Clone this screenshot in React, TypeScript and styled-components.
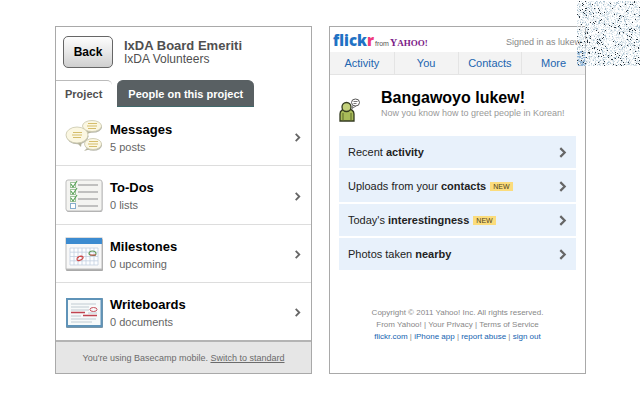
import React from "react";
import styled, { createGlobalStyle } from "styled-components";

const GlobalStyle = createGlobalStyle`
  *, *::before, *::after { box-sizing: border-box; }
  body { margin: 0; background: #fff; font-family: "Liberation Sans", Arial, sans-serif; color: #333; }
  a { color: inherit; text-decoration: none; }
  h1, h2, p, ul { margin: 0; padding: 0; }
  ul { list-style: none; }
`;

const Page = styled.main`
  position: relative;
  display: grid;
  grid-template-columns: 1fr 1fr;
  gap: 17px;
  min-height: 100vh;
  padding: 26px 54px 26px 55px;
`;

const Phone = styled.section`
  display: flex;
  flex-direction: column;
  min-width: 0;
  background: #fff;
  border: 1px solid #a9a9a9;
`;

/* Basecamp */

const ProjectHeader = styled.header`
  display: flex;
  align-items: center;
  gap: 11px;
  height: 53px;
  padding: 0 7px 4px;
`;

const BackButton = styled.button`
  width: 50px;
  height: 32px;
  padding: 0;
  border: 1px solid #666;
  border-radius: 5px;
  background: linear-gradient(#fdfdfd, #e8e8e8 50%, #cfcfcf);
  color: #000;
  font: bold 12px "Liberation Sans", Arial, sans-serif;
`;

const ProjectTitle = styled.h1`
  padding-top: 1px;
  font-size: 13px;
  line-height: 14px;
  color: #505050;
`;

const ProjectOrg = styled.p`
  font-size: 12px;
  line-height: 13px;
  color: #505050;
`;

const Tabs = styled.nav`
  display: flex;
  gap: 5px;
  height: 27px;
`;

const Tab = styled.a<{ $active?: boolean }>`
  display: flex;
  align-items: center;
  padding: ${(p) => (p.$active ? "0 10px 0 9px" : "0 11px")};
  border-radius: ${(p) => (p.$active ? "0 5px 0 0" : "6px 6px 0 0")};
  border-top: 1px solid ${(p) => (p.$active ? "#bbb" : "#596063")};
  border-bottom: 1px solid ${(p) => (p.$active ? "#fff" : "#40696b")};
  background: ${(p) => (p.$active ? "#fff" : "#596063")};
  color: ${(p) => (p.$active ? "#505050" : "#fff")};
  font-size: 11px;
  font-weight: bold;
  white-space: nowrap;
`;

const ToolList = styled.ul`
  display: grid;
  grid-auto-rows: 1fr;
  flex: 1;
`;

const ToolItem = styled.li`
  display: grid;
  & + & { border-top: 1px solid #ddd; }
`;

const ToolLink = styled.a`
  display: flex;
  align-items: center;
  gap: 6px;
  padding: 3px 9px 0;
`;

const ToolText = styled.div`
  flex: 1;
`;

const ToolName = styled.h2`
  font-size: 13px;
  line-height: 18px;
  color: #000;
`;

const ToolCount = styled.p`
  font-size: 11px;
  line-height: 16px;
  color: #666;
`;

const ProjectFooter = styled.footer`
  display: flex;
  align-items: center;
  justify-content: center;
  height: 33px;
  border-top: 2px solid #b4b4b4;
  background: #e6e6e6;
  color: #6b6b6b;
  font-size: 9px;
  white-space: pre;
  a { text-decoration: underline; }
`;

/* Flickr */

const FlickrHeader = styled.header`
  display: flex;
  align-items: center;
  justify-content: space-between;
  height: 25px;
  padding: 4px 4px 0 3px;
`;

const Logo = styled.a`
  display: flex;
  align-items: baseline;
  line-height: 20px;
`;

const LogoName = styled.span`
  font: 800 15px/20px "Open Sans", sans-serif;
  color: #1f72c4;
  span { color: #ee3a7c; }
`;

const LogoFrom = styled.span`
  margin: 0 1px;
  font-size: 7px;
  color: #555;
`;

const LogoYahoo = styled.span`
  font: bold 9px "Liberation Serif", serif;
  color: #7b2087;
  span { font-size: 10px; }
`;

const SignedIn = styled.p`
  font-size: 9px;
  color: #888;
`;

const FlickrNav = styled.nav`
  display: grid;
  grid-template-columns: repeat(4, 1fr);
  height: 23px;
  border-bottom: 1px solid #e4e4e4;
  background: #f3f3f3;
`;

const NavLink = styled.a`
  display: flex;
  align-items: center;
  justify-content: center;
  color: #2265b0;
  font-size: 11px;
  & + & { border-left: 1px solid #e4e4e4; }
`;

const Greeting = styled.div`
  display: flex;
  align-items: flex-end;
  gap: 15px;
  height: 47px;
  padding-left: 9px;
`;

const GreetingTitle = styled.h1`
  font-size: 16px;
  line-height: 18px;
  color: #000;
`;

const GreetingNote = styled.p`
  padding-bottom: 3px;
  font-size: 9px;
  line-height: 12px;
  color: #999;
  white-space: nowrap;
`;

const FeedList = styled.ul`
  display: grid;
  gap: 2px;
  padding: 14px 9px 0;
`;

const FeedLink = styled.a`
  display: flex;
  align-items: center;
  height: 32px;
  padding: 0 8px 0 9px;
  background: #e8f1fb;
  color: #222;
  font-size: 11px;
  svg { margin-left: auto; }
`;

const FeedLabel = styled.span`
  white-space: pre;
`;

const NewBadge = styled.span`
  margin-left: 4px;
  padding: 0 3px;
  background: #fbdc7c;
  color: #4d4220;
  font-size: 7px;
  line-height: 9px;
`;

const FlickrFooter = styled.footer`
  margin-top: auto;
  padding-bottom: 30px;
  color: #888;
  font-size: 8px;
  line-height: 12px;
  text-align: center;
`;

const BlueLink = styled.a`
  color: #1463b0;
`;

const Speckle = styled.svg`
  position: absolute;
  top: 0;
  right: 0;
`;

const Chevron = ({ size = 10, color = "#666" }: { size?: number; color?: string }) => (
  <svg width={size} height={size} viewBox="0 0 10 10" fill="none" stroke={color} strokeWidth="2" aria-hidden="true">
    <path d="M3 1l4 4-4 4" />
  </svg>
);

const bubbles = [
  { x: 27, y: 6, rx: 9.5, ry: 5.5, tail: "M22 10l-2 5 7-3z" },
  { x: 12, y: 15, rx: 11, ry: 8, tail: "M11 22l5 5 1-7z" },
  { x: 28, y: 24, rx: 8.5, ry: 5.5, tail: "M23 27l-4 4 7-2z" },
];

const MessagesIcon = () => (
  <svg width="39" height="36" viewBox="0 0 39 36" aria-hidden="true">
    {bubbles.map((b) => (
      <g key={b.x}>
        <ellipse cx={b.x + 0.5} cy={b.y + 1.3} rx={b.rx} ry={b.ry} fill="#b9b9ad" />
        <path d={b.tail} fill="#b5b39c" />
        <ellipse cx={b.x} cy={b.y} rx={b.rx} ry={b.ry} fill="#fbf7e2" stroke="#c9c6ab" strokeWidth=".8" />
        <path
          d={`M${b.x - 4} ${b.y - 2.5}h9M${b.x - 5} ${b.y}h10M${b.x - 4} ${b.y + 2.5}h8`}
          stroke="#d5bd6b"
          strokeWidth="1"
        />
      </g>
    ))}
  </svg>
);

const TodosIcon = () => (
  <svg width="39" height="36" viewBox="0 0 39 36" aria-hidden="true">
    <rect x="1.5" y="3" width="36" height="31" rx="2" fill="#aaa" />
    <rect x="1" y="2" width="36" height="31" rx="2" fill="#f4f4f1" stroke="#bdbdbd" />
    {[4, 11, 18, 25].map((y, i) => (
      <g key={y}>
        <rect x="5.5" y={y + 0.5} width="5" height="5" fill="#fff" stroke={i < 3 ? "#9fc39b" : "#87aecd"} />
        {i < 3 && <path d={`M6 ${y + 2}l2 3 4-6`} fill="none" stroke="#5ba35a" strokeWidth="1.2" />}
        <path d={`M13 ${y + 3}h20`} stroke="#a9a9a9" strokeWidth="1.4" />
      </g>
    ))}
  </svg>
);

const MilestonesIcon = () => (
  <svg width="39" height="36" viewBox="0 0 39 36" aria-hidden="true">
    <rect x="1" y="2" width="37" height="32" rx="1" fill="#aaa" />
    <rect x="1" y="1" width="36" height="31" fill="#f8f8f8" stroke="#bbb" />
    <rect x="1" y="1" width="36" height="6" fill="#3c8bd0" />
    <path d="M5 11h28v17H5zM5 15.2h28M5 19.5h28M5 23.8h28M9 11v17M13 11v17M17 11v17M21 11v17M25 11v17M29 11v17" fill="#fcfdff" stroke="#c3cfe0" strokeWidth=".8" />
    <path d="M13 21c1-3 6-2 5 0s-6 4-6 1 4-3 6-2" fill="none" stroke="#cd4b4b" strokeWidth="1.2" />
    <path d="M24 17c0-4 7-4 7 0 0 2-6 2-7 0" fill="none" stroke="#5f9956" strokeWidth="1.2" />
    <path d="M25 18h6" stroke="#cd4b4b" />
  </svg>
);

const WriteboardsIcon = () => (
  <svg width="39" height="36" viewBox="0 0 39 36" aria-hidden="true">
    <rect x="1" y="3" width="37" height="30" rx="1" fill="#7895a7" />
    <rect x="2" y="4" width="34.500" height="27" fill="#f7fafa" stroke="#5f93b8" strokeWidth="2" />
    <path d="M6 9h25M6 12h18M6 15h18M6 21h10M23 18h9M6 24h25M6 27h21" stroke="#c0cbd2" />
    <path d="M6 17.500h14M18 20.500h14" stroke="#c04450" strokeWidth="1.5" />
    <ellipse cx="28.5" cy="14.5" rx="3.5" ry="2" fill="none" stroke="#c85360" />
  </svg>
);

const BuddyIcon = () => (
  <svg width="27" height="24" viewBox="0 0 27 24" aria-hidden="true">
    <path d="M1 23v-7c0-4 3-5 7-5s7 1 7 5v7z" fill="#a8bb59" stroke="#333a20" strokeWidth="1.3" />
    <path d="M4 15v8M12 15v8" stroke="#5c6a2a" strokeWidth="1" />
    <circle cx="7.500" cy="9" r="4.5" fill="#c3d17b" stroke="#333a20" strokeWidth="1.3" />
    <ellipse cx="16.5" cy="4.500" rx="4" ry="3.5" fill="#fff" stroke="#555" />
    <path d="M14 7.500l-1 3 4-2.500M14.500 3.500h4M14.500 5.500h3" fill="none" stroke="#555" strokeWidth=".8" />
  </svg>
);

const SPECKLE_WIDTH = 63;
const SPECKLE_HEIGHT = 66;

function buildSpeckles() {
  const layers = [
    { color: "#2b3741", share: 0.045, d: "" },
    { color: "#a9bfcd", share: 0.07, d: "" },
    { color: "#d3e0e8", share: 0.18, d: "" },
    { color: "#edf1f3", share: 0.25, d: "" },
  ];
  const blue = { color: "#8fb4d8", share: 0, d: "" };
  let seed = 7919;
  for (let y = 1; y < SPECKLE_HEIGHT; y++) {
    for (let x = 0; x < SPECKLE_WIDTH; x++) {
      seed = (Math.imul(seed, 1664525) + 1013904223) >>> 0;
      let value = seed / 4294967296;
      if (x < 9 && y > 50 && value > 0.6) {
        blue.d += `M${x} ${y}h1v1h-1z`;
        continue;
      }
      for (const layer of layers) {
        if (value < layer.share) {
          layer.d += `M${x} ${y}h1v1h-1z`;
          break;
        }
        value -= layer.share;
      }
    }
  }
  return [...layers, blue];
}

const speckles = buildSpeckles();

const tools = [
  { name: "Messages", count: "5 posts", Icon: MessagesIcon },
  { name: "To-Dos", count: "0 lists", Icon: TodosIcon },
  { name: "Milestones", count: "0 upcoming", Icon: MilestonesIcon },
  { name: "Writeboards", count: "0 documents", Icon: WriteboardsIcon },
];

const feeds = [
  { lead: "Recent ", strong: "activity", isNew: false },
  { lead: "Uploads from your ", strong: "contacts", isNew: true },
  { lead: "Today's ", strong: "interestingness", isNew: true },
  { lead: "Photos taken ", strong: "nearby", isNew: false },
];

export default function App() {
  return (
    <>
      <GlobalStyle />
      <Page>
        <Phone>
          <ProjectHeader>
            <BackButton type="button">Back</BackButton>
            <div>
              <ProjectTitle>IxDA Board Emeriti</ProjectTitle>
              <ProjectOrg>IxDA Volunteers</ProjectOrg>
            </div>
          </ProjectHeader>
          <Tabs>
            <Tab href="#project" $active>Project</Tab>
            <Tab href="#people">People on this project</Tab>
          </Tabs>
          <ToolList>
            {tools.map(({ name, count, Icon }) => (
              <ToolItem key={name}>
                <ToolLink href="#tool">
                  <Icon />
                  <ToolText>
                    <ToolName>{name}</ToolName>
                    <ToolCount>{count}</ToolCount>
                  </ToolText>
                  <Chevron size={9} />
                </ToolLink>
              </ToolItem>
            ))}
          </ToolList>
          <ProjectFooter>
            You're using Basecamp mobile. <a href="#standard">Switch to standard</a>
          </ProjectFooter>
        </Phone>

        <Phone>
          <FlickrHeader>
            <Logo href="#home">
              <LogoName>flick<span>r</span></LogoName>
              <LogoFrom>from</LogoFrom>
              <LogoYahoo><span>Y</span>AHOO!</LogoYahoo>
            </Logo>
            <SignedIn>Signed in as lukew</SignedIn>
          </FlickrHeader>
          <FlickrNav>
            {["Activity", "You", "Contacts", "More"].map((label) => (
              <NavLink key={label} href="#nav">{label}</NavLink>
            ))}
          </FlickrNav>
          <Greeting>
            <BuddyIcon />
            <div>
              <GreetingTitle>Bangawoyo lukew!</GreetingTitle>
              <GreetingNote>Now you know how to greet people in Korean!</GreetingNote>
            </div>
          </Greeting>
          <FeedList>
            {feeds.map(({ lead, strong, isNew }) => (
              <li key={strong}>
                <FeedLink href="#feed">
                  <FeedLabel>{lead}<b>{strong}</b></FeedLabel>
                  {isNew && <NewBadge>NEW</NewBadge>}
                  <Chevron size={11} />
                </FeedLink>
              </li>
            ))}
          </FeedList>
          <FlickrFooter>
            <p>Copyright © 2011 Yahoo! Inc. All rights reserved.</p>
            <p>
              <a href="#yahoo">From Yahoo!</a> | <a href="#privacy">Your Privacy</a> | <a href="#terms">Terms of Service</a>
            </p>
            <p>
              <BlueLink href="#flickr">flickr.com</BlueLink> | <BlueLink href="#app">iPhone app</BlueLink> |{" "}
              <BlueLink href="#abuse">report abuse</BlueLink> | <BlueLink href="#out">sign out</BlueLink>
            </p>
          </FlickrFooter>
        </Phone>

        <Speckle
          width={SPECKLE_WIDTH}
          height={SPECKLE_HEIGHT}
          viewBox={`0 0 ${SPECKLE_WIDTH} ${SPECKLE_HEIGHT}`}
          aria-hidden="true"
        >
          {speckles.map((layer) => (
            <path key={layer.color} d={layer.d} fill={layer.color} shapeRendering="crispEdges" />
          ))}
        </Speckle>
      </Page>
    </>
  );
}
